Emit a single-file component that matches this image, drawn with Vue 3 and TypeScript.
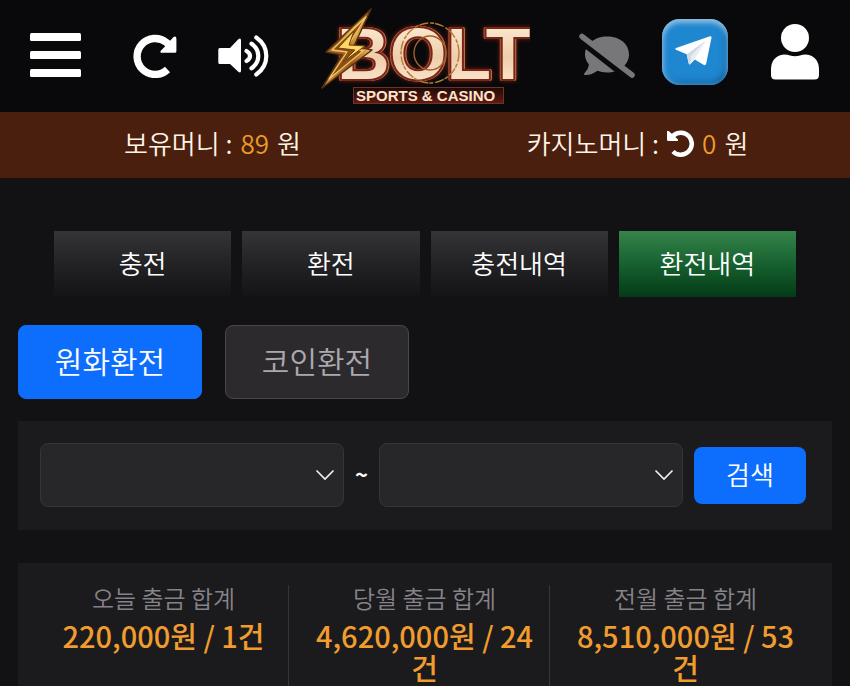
<script setup lang="ts">
import { ref } from 'vue'

const balance = ref(89)
const casinoBalance = ref(0)

const tabs = ['충전', '환전', '충전내역', '환전내역']
const activeTab = ref('환전내역')

const kinds = ['원화환전', '코인환전']
const activeKind = ref('원화환전')

const fromDate = ref('')
const toDate = ref('')

interface Total {
  label: string
  amount: number
  count: number
}

const totals: Total[] = [
  { label: '오늘 출금 합계', amount: 220000, count: 1 },
  { label: '당월 출금 합계', amount: 4620000, count: 24 },
  { label: '전월 출금 합계', amount: 8510000, count: 53 },
]

const format = (value: number): string => value.toLocaleString('en-US')
</script>

<template>
  <div class="page">
    <header class="header">
      <div class="group">
        <button class="icon-button" type="button" aria-label="메뉴">
          <svg width="51" height="48" viewBox="0 0 51 48" fill="#fff">
            <rect y="1" width="51" height="8" rx="1.5" />
            <rect y="19" width="51" height="8" rx="1.5" />
            <rect y="37" width="51" height="8" rx="1.5" />
          </svg>
        </button>
        <button class="icon-button apart-left" type="button" aria-label="새로고침">
          <svg width="44" height="44" viewBox="0 0 44 44">
            <path d="M34.5 35.5A18 18 0 1 1 33.5 8.5L36 11" fill="none" stroke="#fff" stroke-width="7.4" />
            <path d="M40.5 2.9Q43.4 1.7 43.4 4.7V17.2Q43.4 18.8 41.8 18.8H29.3Q26.2 18.8 28 16.5L30.5 14Z" fill="#fff" />
          </svg>
        </button>
        <button class="icon-button" type="button" aria-label="소리">
          <svg width="51" height="44" viewBox="0 0 51 44">
            <path d="M1.8 14H12L20.3 5.2Q23 3.3 23 6.5V36.5Q23 39.5 20.3 37.7L12 30H1.8Q.3 30 .3 28.5V15.5Q.3 14 1.8 14Z" fill="#fff" />
            <g fill="none" stroke="#fff" stroke-width="4.2" stroke-linecap="round">
              <path d="M28.5 17Q32 19 32 22T28.5 27" />
              <path d="M33.5 9.8Q40.3 14.5 40.3 22T33.5 34.2" />
              <path d="M38.3 3.5Q48.3 10.5 48.3 22T38.3 40.5" />
            </g>
          </svg>
        </button>
      </div>

      <a class="logo" href="#">
        <svg width="210" height="112" viewBox="0 0 210 112">
          <defs>
            <linearGradient id="cream" x1="0" y1="0" x2="0" y2="1">
              <stop offset="0" stop-color="#fff4df" />
              <stop offset=".55" stop-color="#efcdaa" />
              <stop offset="1" stop-color="#fff0dc" />
            </linearGradient>
            <linearGradient id="gold" x1="1" y1="0" x2="0" y2="1">
              <stop offset="0" stop-color="#8d5a1d" />
              <stop offset=".3" stop-color="#e0ad4c" />
              <stop offset=".55" stop-color="#97551a" />
              <stop offset="1" stop-color="#d99a42" />
            </linearGradient>
            <linearGradient id="plate" x1="0" y1="0" x2="0" y2="1">
              <stop offset="0" stop-color="#1f0b08" />
              <stop offset="1" stop-color="#621b11" />
            </linearGradient>
          </defs>
          <text class="word" x="17" y="79">BOLT</text>
          <ellipse cx="110" cy="53" rx="29" ry="30" fill="none" stroke="#b67a34" stroke-width="1.4" stroke-dasharray="9 2 4 1" />
          <ellipse cx="110" cy="53" rx="16" ry="17" fill="none" stroke="#a3602a" stroke-width="1.4" />
          <path d="M51 9L6 52L22 55L2 88L52 50L34 46Z" fill="url(#gold)" stroke="#56310f" stroke-width="1.5" stroke-linejoin="round" />
          <path d="M46 17L12 50L27 52L9 79L43 51L27 47Z" fill="#8a4f14" stroke="#f3c566" stroke-width="1.3" stroke-linejoin="round" />
          <path d="M34 31L18 48L35 50L23 62L45 46L29 45Z" fill="#ffd766" stroke="#704010" stroke-width="1" />
          <rect x="33.5" y="87.5" width="150" height="16" fill="url(#plate)" stroke="#6e3324" />
          <text class="tagline" x="36" y="101">SPORTS &amp; CASINO</text>
        </svg>
      </a>

      <div class="group group-end">
        <button class="icon-button" type="button" aria-label="채팅 끄기">
          <svg width="56" height="46" viewBox="0 0 56 46">
            <path d="M28 3.5C41 3.5 50 11 50 21.5C50 32 40 39.5 28 39.5Q22.5 39.5 18.5 37.8Q12 42.5 6 42Q4 41.5 6 39.5Q9.5 35.5 10 31.5Q6 27 6 21.5C6 11 16 3.5 28 3.5Z" fill="#77777a" />
            <path d="M1 7L52 47" stroke="#0a090b" stroke-width="7" />
            <path d="M3 3.5L53 42" stroke="#77777a" stroke-width="5.5" stroke-linecap="round" />
          </svg>
        </button>
        <a class="icon-button telegram" href="#" aria-label="텔레그램">
          <svg width="46" height="42" viewBox="0 0 46 42">
            <path d="M4.5 19Q2 17.8 4.8 16.7L38 5.2Q40 4.8 39.5 6.8L34.2 32.5Q33.6 35 31.4 33.7L22.8 28.5L18.5 33Q17 34.2 16.6 32L14.7 23.3Z" fill="#fff" />
            <path d="M14.7 23.3L34 9.5L19.8 24.5L18.5 33Q17 34.2 16.6 32Z" fill="#d0dae5" />
            <path d="M19.8 24.5L34 10L22.5 28.5L18.5 32Z" fill="#e7eef5" />
          </svg>
        </a>
        <button class="icon-button profile" type="button" aria-label="내 정보">
          <svg width="50" height="58" viewBox="0 0 50 58" fill="#fff">
            <circle cx="25" cy="16" r="14" />
            <path d="M14 32.5Q18 32.5 20 33.5Q25 34.8 30 33.5Q32 32.5 36 32.5Q49 34 49 48V53Q49 57.5 44.5 57.5H5.5Q1 57.5 1 53V48Q1 34 14 32.5Z" />
          </svg>
        </button>
      </div>
    </header>

    <section class="money">
      <p class="money-item">보유머니 : <span class="number">{{ balance }}</span> 원</p>
      <p class="money-item">
        카지노머니 :
        <button class="icon-button" type="button" aria-label="카지노머니 새로고침">
          <svg width="27" height="28" viewBox="0 0 27 28">
            <path d="M6 22.5A11 11 0 1 0 6.5 6.5L4.5 8.5" fill="none" stroke="#fff" stroke-width="4.5" />
            <path d="M0 2.8Q.3 1 2 2.3L11 10.5Q11.5 12 10 12H1.5Q0 12 0 10.5Z" fill="#fff" />
          </svg>
        </button>
        <span class="number">{{ casinoBalance }}</span> 원
      </p>
    </section>

    <main class="main">
      <nav class="tabs">
        <button
          v-for="tab in tabs"
          :key="tab"
          type="button"
          class="tab"
          :class="{ active: tab === activeTab }"
          @click="activeTab = tab"
        >
          {{ tab }}
        </button>
      </nav>

      <div class="kinds">
        <button
          v-for="kind in kinds"
          :key="kind"
          type="button"
          class="kind"
          :class="{ active: kind === activeKind }"
          @click="activeKind = kind"
        >
          {{ kind }}
        </button>
      </div>

      <form class="panel search" @submit.prevent>
        <div class="field">
          <select v-model="fromDate" class="select" aria-label="시작일">
            <option value=""></option>
          </select>
          <svg class="chevron" width="20" height="12" viewBox="0 0 20 12">
            <path d="M1.5 1.5L10 10L18.5 1.5" fill="none" stroke="#f2f2f4" stroke-width="1.6" />
          </svg>
        </div>
        <span class="tilde">~</span>
        <div class="field">
          <select v-model="toDate" class="select" aria-label="종료일">
            <option value=""></option>
          </select>
          <svg class="chevron" width="20" height="12" viewBox="0 0 20 12">
            <path d="M1.5 1.5L10 10L18.5 1.5" fill="none" stroke="#f2f2f4" stroke-width="1.6" />
          </svg>
        </div>
        <button class="submit" type="submit">검색</button>
      </form>

      <section class="panel totals">
        <div v-for="total in totals" :key="total.label" class="total">
          <div class="total-label">{{ total.label }}</div>
          <div class="total-value">{{ format(total.amount) }}원 / {{ total.count }}건</div>
        </div>
      </section>
    </main>
  </div>
</template>

<style>
body {
  margin: 0;
  background: #121114;
}
</style>

<style scoped>
.page {
  color: #fff;
  font-family: "Noto Sans CJK KR", sans-serif;
  font-size: 26px;
  font-weight: 350;
  line-height: 32px;
}

button,
select {
  margin: 0;
  border: 0;
  color: inherit;
  font: inherit;
  cursor: pointer;
}

svg {
  display: block;
}

.header {
  display: grid;
  grid-template-columns: 1fr auto 1fr;
  align-items: center;
  height: 112px;
  padding: 0 30px;
  background: #09090b;
}

.group {
  display: flex;
  align-items: center;
  gap: 41px;
}

.group-end {
  justify-content: flex-end;
  gap: 27px;
}

.icon-button {
  display: block;
  padding: 0;
  background: none;
}

.apart-left {
  margin-left: 11px;
}

.profile {
  margin-bottom: 10px;
  margin-left: 15px;
}

.telegram {
  display: grid;
  place-items: center;
  width: 66px;
  height: 66px;
  margin-bottom: 8px;
  border-radius: 18px;
  background: #1e87d0;
  box-shadow: inset 0 4px 5px #8dbbe0, inset 3px 0 5px #4a9dd8, inset -2px -3px 6px #176099;
}

.word {
  fill: url(#cream);
  stroke: #7a2417;
  stroke-width: 4px;
  stroke-linejoin: round;
  paint-order: stroke;
  filter: drop-shadow(1px 0 0 #c07850) drop-shadow(-1px 0 0 #a85c3c) drop-shadow(0 0 2px #6b2010);
  font-family: "Liberation Sans", sans-serif;
  font-size: 73px;
  font-weight: 700;
}

.tagline {
  fill: #ffe3cc;
  font-family: "Liberation Sans", sans-serif;
  font-size: 15px;
  font-weight: 700;
}

.money {
  display: grid;
  grid-template-columns: 1fr 1fr;
  align-items: center;
  box-sizing: border-box;
  height: 66px;
  padding-bottom: 4px;
  background: #4a1f0d;
  color: #fff3e8;
}

.money-item {
  display: flex;
  align-items: center;
  justify-content: center;
  gap: 8px;
  margin: 0;
}

.number {
  color: #ee9a2b;
}

.main {
  padding: 53px 18px 0;
}

.tabs {
  display: grid;
  grid-template-columns: repeat(4, 1fr);
  gap: 11px;
  padding: 0 36px;
}

.tab {
  height: 66px;
  padding: 0 0 2px;
  background: linear-gradient(#343336, #232225 50%, #131215);
}

.tab.active {
  background: linear-gradient(#35844a, #176130 50%, #033b16);
}

.kinds {
  display: flex;
  gap: 23px;
  margin-top: 28px;
}

.kind {
  width: 184px;
  height: 74px;
  padding: 0 0 4px;
  border: 1px solid #49474b;
  border-radius: 8px;
  background: #2d2a2e;
  color: #aba9ae;
  font-size: 30px;
}

.kind.active {
  border-color: #0d6efd;
  background: #0d6efd;
  color: #fff;
}

.panel {
  background: #1b1a1d;
}

.search {
  display: flex;
  align-items: center;
  gap: 11px;
  margin-top: 22px;
  padding: 22px 26px 23px 22px;
}

.field {
  display: grid;
  flex: 1;
  align-items: center;
}

.select {
  grid-area: 1 / 1;
  width: 100%;
  height: 64px;
  padding: 0 44px 0 16px;
  appearance: none;
  border: 1px solid #353437;
  border-radius: 8px;
  background: #272629;
}

.chevron {
  grid-area: 1 / 1;
  justify-self: end;
  margin-right: 9px;
  pointer-events: none;
}

.tilde {
  padding-bottom: 4px;
  font-size: 22px;
  font-weight: 700;
}

.submit {
  width: 112px;
  height: 57px;
  padding: 0 0 2px;
  border-radius: 8px;
  background: #0d6efd;
}

.totals {
  display: grid;
  grid-template-columns: repeat(3, 1fr);
  gap: 11px;
  margin-top: 33px;
  padding: 22px 21px 0;
}

.total {
  padding: 0 8px 3px;
  border-right: 1px solid #363538;
  text-align: center;
}

.total:last-child {
  border-right-color: transparent;
}

.total-label {
  padding-bottom: 8px;
  color: #858388;
  font-size: 24px;
  line-height: 26px;
}

.total-value {
  color: #f09c2e;
  font-size: 29px;
  font-weight: 500;
}
</style>
